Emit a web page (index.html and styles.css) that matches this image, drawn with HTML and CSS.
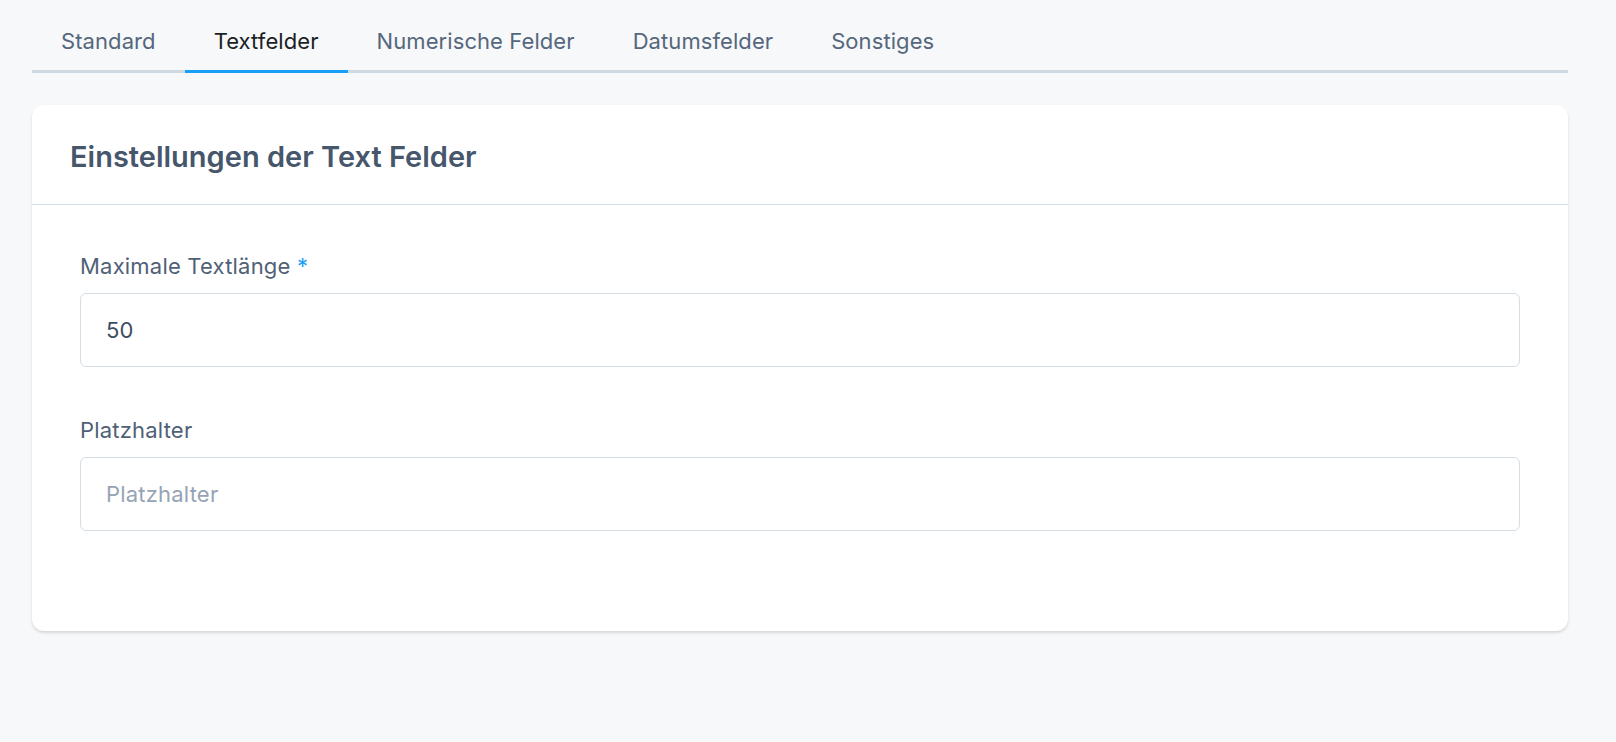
FILE: index.html
```html
<!DOCTYPE html>
<html lang="de">
<head>
  <meta charset="UTF-8">
  <meta name="viewport" content="width=device-width, initial-scale=1.0">
  <title>Einstellungen der Text Felder</title>
  <link rel="stylesheet" href="styles.css">
</head>
<body>
  <div class="page">
    <nav class="tabs">
      <a class="tab" href="#">Standard</a>
      <a class="tab active" href="#">Textfelder</a>
      <a class="tab" href="#">Numerische Felder</a>
      <a class="tab" href="#">Datumsfelder</a>
      <a class="tab" href="#">Sonstiges</a>
    </nav>

    <div class="card">
      <div class="card-header">
        <h2>Einstellungen der Text Felder</h2>
      </div>
      <div class="card-body">
        <div class="form-group">
          <label for="maxLength">Maximale Textlänge <span class="required">*</span></label>
          <input type="text" id="maxLength" value="50">
        </div>
        <div class="form-group">
          <label for="placeholder">Platzhalter</label>
          <input type="text" id="placeholder" placeholder="Platzhalter">
        </div>
      </div>
    </div>
  </div>
</body>
</html>
```

FILE: styles.css
```css
body, html {
  margin: 0;
  padding: 0;
  height: 100%;
  font-family: Inter, "Noto Sans", sans-serif;
  background-color: #f7f8fa;
  color: #4c5e73;
}

.page {
  padding: 16px 48px 0 32px;
}

/* tab bar */
.tabs {
  display: flex;
  border-bottom: 3px solid #cfd9e2;
}

.tab {
  display: block;
  padding: 10px 29px 14px;
  margin-bottom: -3px;
  border-bottom: 3px solid transparent;
  font-size: 22px;
  line-height: 30px;
  letter-spacing: 0.08px;
  color: #55677c;
  text-decoration: none;
}

.tab.active {
  color: #1c1f24;
  border-bottom-color: #1a9ff7;
}

/* card */
.card {
  margin-top: 32px;
  background-color: #fff;
  border-radius: 12px;
  box-shadow: 0 2px 3px rgba(0, 0, 0, 0.13);
}

.card-header {
  padding: 34px 38px 29px;
  border-bottom: 1px solid #d4dde5;
}

.card-header h2 {
  margin: 0;
  font-size: 29px;
  line-height: 36px;
  font-weight: 600;
  color: #46566b;
}

.card-body {
  padding: 46px 48px 52px;
}

.form-group {
  margin-bottom: 48px;
}

label {
  display: block;
  margin-bottom: 12px;
  font-size: 22px;
  line-height: 30px;
  letter-spacing: 0.2px;
  color: #4f6176;
}

.required {
  color: #1a9ff7;
}

input {
  display: block;
  box-sizing: border-box;
  width: 100%;
  height: 74px;
  padding: 0 25px;
  border: 1px solid #d5dde5;
  border-radius: 6px;
  background-color: #fff;
  font-family: inherit;
  font-size: 22px;
  letter-spacing: 0.2px;
  color: #3d4d61;
  outline: none;
}

input::placeholder {
  color: #95a4b5;
}
```
